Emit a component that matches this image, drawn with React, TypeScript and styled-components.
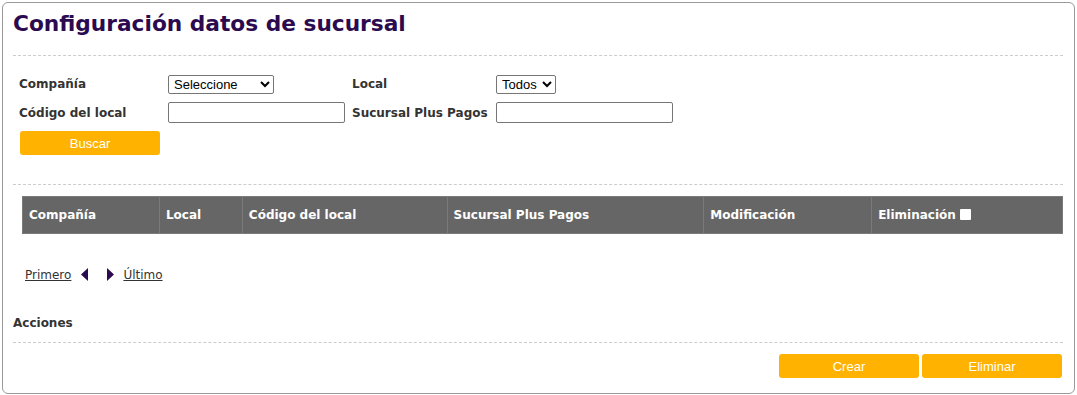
import React from "react";
import styled, { createGlobalStyle } from "styled-components";

const Global = createGlobalStyle`
  html, body { margin: 0; padding: 0; background: #fff; }
  body { padding: 2px; font-family: "DejaVu Sans", Verdana, sans-serif; color: #333; }
  * { box-sizing: border-box; }
`;

const Panel = styled.div`
  width: 1073px;
  height: 392px;
  border: 1px solid #999;
  border-radius: 6px;
  padding: 6px 11px 0 10px;
  display: flex;
  flex-direction: column;
`;

const Title = styled.h1`
  margin: 0;
  font-family: "DejaVu Sans", Verdana, sans-serif;
  font-size: 21.7px;
  font-weight: bold;
  color: #2c0a4f;
  line-height: 30px;
  height: 46px;
`;

const Divider = styled.hr`
  margin: 0;
  border: 0;
  border-top: 1px dashed #ccc;
  width: 100%;
`;

const Form = styled.div`
  display: grid;
  grid-template-columns: 149px 184px 144px 180px;
  grid-auto-rows: 29px;
  align-items: center;
  padding: 13px 0 0 6px;
`;

const Label = styled.label`
  font-size: 12px;
  font-weight: bold;
  color: #333;
`;

const Select = styled.select<{ $w: number }>`
  width: ${(p) => p.$w}px;
  height: 19px;
  font-family: Arial, "Liberation Sans", sans-serif;
  font-size: 13px;
  border: 1px solid #767676;
  border-radius: 2px;
  background: #fff;
  color: #000;
  padding: 0 0 0 1px;
`;

const Input = styled.input`
  width: 177px;
  height: 21px;
  border: 1px solid #767676;
  border-radius: 2px;
`;

const Button = styled.button<{ $w?: number }>`
  width: ${(p) => p.$w ?? 140}px;
  height: 24px;
  background: #ffb300;
  border: 0;
  border-radius: 3px;
  color: #fff;
  font-family: "Liberation Sans", Arial, sans-serif;
  font-size: 13px;
  padding: 0;
`;

const SearchRow = styled.div`
  padding: 4px 0 0 7px;
  height: 57px;
`;

const TableWrap = styled.div`
  padding: 11px 0 0 9px;
`;

const Table = styled.table`
  width: 1041px;
  border-collapse: collapse;
`;

const Th = styled.th<{ $w: number }>`
  width: ${(p) => p.$w}px;
  height: 37px;
  background: #666;
  border: 1px solid #7a7a7a;
  color: #fff;
  font-family: Tahoma, "DejaVu Sans", sans-serif;
  font-size: 12px;
  font-weight: bold;
  text-align: left;
  padding: 0 6px;
`;

const Check = styled.span`
  display: inline-block;
  width: 11px;
  height: 11px;
  background: #fff;
  margin-left: 4px;
  vertical-align: -1px;
  border-radius: 1px;
`;

const Pager = styled.div`
  display: flex;
  align-items: center;
  height: 15px;
  margin: 33px 0 33px;
  padding-left: 12px;
  font-size: 12px;
`;

const PagerLink = styled.a<{ $ml?: number }>`
  color: #333;
  text-decoration: underline;
  font-family: "DejaVu Sans", Verdana, sans-serif;
  margin-left: ${(p) => p.$ml ?? 0}px;
`;

const Arrow = styled.svg<{ $ml: number }>`
  margin-left: ${(p) => p.$ml}px;
`;

const Section = styled.div`
  font-size: 12px;
  font-weight: bold;
  color: #333;
  height: 27px;
  padding-top: 1px;
`;

const Actions = styled.div`
  display: flex;
  justify-content: flex-end;
  gap: 3px;
  padding: 11px 1px 0 0;
`;

const tableCols: [string, number][] = [
  ["Compañía", 137],
  ["Local", 83],
  ["Código del local", 205],
  ["Sucursal Plus Pagos", 257],
  ["Modificación", 168],
  ["Eliminación", 191],
];

export default function App() {
  return (
    <>
      <Global />
      <Panel>
        <Title>Configuración datos de sucursal</Title>
        <Divider />
        <Form>
          <Label>Compañía</Label>
          <div>
            <Select $w={106} defaultValue="s">
              <option value="s">Seleccione</option>
            </Select>
          </div>
          <Label>Local</Label>
          <div>
            <Select $w={60} defaultValue="t">
              <option value="t">Todos</option>
            </Select>
          </div>
          <Label>Código del local</Label>
          <div>
            <Input />
          </div>
          <Label>Sucursal Plus Pagos</Label>
          <div>
            <Input />
          </div>
        </Form>
        <SearchRow>
          <Button>Buscar</Button>
        </SearchRow>
        <Divider />
        <TableWrap>
          <Table>
            <thead>
              <tr>
                {tableCols.map(([name, w]) => (
                  <Th key={name} $w={w}>
                    {name}
                    {name === "Eliminación" && <Check />}
                  </Th>
                ))}
              </tr>
            </thead>
          </Table>
        </TableWrap>
        <Pager>
          <PagerLink href="#">Primero</PagerLink>
          <Arrow $ml={10} width="8" height="13" viewBox="0 0 8 13">
            <path d="M7 0 L0 6.5 L7 13 Z" fill="#2c0a4f" />
          </Arrow>
          <Arrow $ml={18} width="8" height="13" viewBox="0 0 8 13">
            <path d="M0 0 L7 6.5 L0 13 Z" fill="#2c0a4f" />
          </Arrow>
          <PagerLink href="#" $ml={8}>Último</PagerLink>
        </Pager>
        <Section>Acciones</Section>
        <Divider />
        <Actions>
          <Button $w={140}>Crear</Button>
          <Button $w={140}>Eliminar</Button>
        </Actions>
      </Panel>
    </>
  );
}
